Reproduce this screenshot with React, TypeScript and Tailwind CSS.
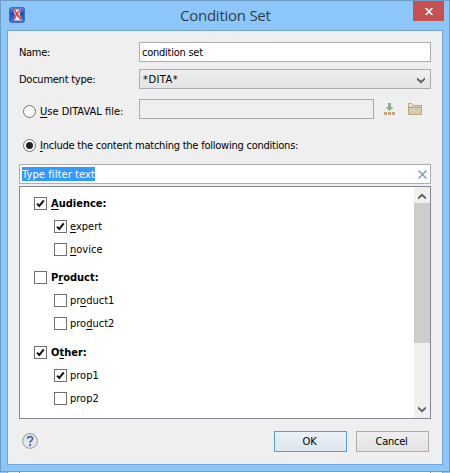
import type { ReactNode } from 'react';

function Mark({ text, at }: { text: string; at: number }) {
  if (at < 0) return <>{text}</>;
  return (
    <>
      {text.slice(0, at)}
      <span className="underline underline-offset-2 decoration-1">{text[at]}</span>
      {text.slice(at + 1)}
    </>
  );
}

function Check({ on }: { on: boolean }) {
  return (
    <span className="flex h-[13px] w-[13px] shrink-0 items-center justify-center border border-[#707070] bg-white">
      {on && (
        <svg width="11" height="11" viewBox="0 0 11 11">
          <path d="M2 5.6 4.3 8 8.8 2.4" fill="none" stroke="#111" strokeWidth="2" />
        </svg>
      )}
    </span>
  );
}

function Radio({ on }: { on: boolean }) {
  return (
    <svg width="13" height="13" viewBox="0 0 13 13" className="shrink-0">
      <circle cx="6.5" cy="6.5" r="6" fill="#fff" stroke="#707070" />
      {on && <circle cx="6.5" cy="6.5" r="3.5" fill="#212121" />}
    </svg>
  );
}

function Chevron({ up = false }: { up?: boolean }) {
  return (
    <svg width="8" height="7" viewBox="0 0 8 7" className={up ? 'rotate-180' : ''}>
      <path d="M0 0.5 4 3.8 8 0.5V2.8L4 6.5 0 2.8Z" fill="#606060" />
    </svg>
  );
}

interface Item {
  label: string;
  at: number;
  on: boolean;
}

interface Group extends Item {
  height: string;
  items: Item[];
}

const groups: Group[] = [
  {
    label: 'Audience:', at: 0, on: true, height: 'h-[74px]',
    items: [
      { label: 'expert', at: 0, on: true },
      { label: 'novice', at: 0, on: false },
    ],
  },
  {
    label: 'Product:', at: 1, on: false, height: 'h-[75px]',
    items: [
      { label: 'product1', at: 2, on: false },
      { label: 'product2', at: 3, on: false },
    ],
  },
  {
    label: 'Other:', at: 1, on: true, height: 'h-[74px]',
    items: [
      { label: 'prop1', at: -1, on: true },
      { label: 'prop2', at: -1, on: false },
    ],
  },
];

function Button({ children, primary = false }: { children: ReactNode; primary?: boolean }) {
  return (
    <button
      className={
        'h-[21px] w-[73px] border pr-[2px] leading-[20px] tracking-[-0.25px] ' +
        (primary
          ? 'border-[#569de5] bg-linear-to-b from-[#ecf1f6] to-[#dde5ee]'
          : 'border-[#acacac] bg-linear-to-b from-[#efefef] to-[#e3e3e3]')
      }
    >
      {children}
    </button>
  );
}

export default function App() {
  return (
    <div className="h-[473px] w-[450px] overflow-hidden bg-[#8dc6f8] font-['DejaVu_Sans_Condensed','DejaVu_Sans',sans-serif] text-[11px] leading-[13px] text-black [font-stretch:condensed]">
      <div className="h-[472px] border border-[#6f9cc6] px-[6px]">
        <header className="flex h-[29px] items-start">
          <svg width="16" height="16" viewBox="0 0 16 16" className="ml-[2px] mt-[6px]">
            <defs>
              <linearGradient id="logo" x1="0" y1="0" x2="0" y2="1">
                <stop offset="0" stopColor="#5b8fe0" />
                <stop offset="0.4" stopColor="#1d4eb0" />
                <stop offset="1" stopColor="#3b7bdc" />
              </linearGradient>
            </defs>
            <rect x="0.5" y="0.5" width="15" height="15" rx="2" fill="url(#logo)" stroke="#3b6fc4" />
            <path d="M4 2.5h8l-1.5 5L13.5 13.5H4L6 8Z" fill="#e6effc" />
            <path d="M4.5 2C7 5 9 9 12.5 13M11.5 2.5C8.5 5.5 6 9 4.5 13.5" fill="none" stroke="#ef3b2c" strokeWidth="1.7" />
          </svg>
          <h1 className="ml-[155px] mt-[4px] whitespace-nowrap font-['Open_Sans','Noto_Sans',sans-serif] text-[15px] leading-[20px] tracking-[-0.25px] text-[#2c3e4e] [font-stretch:normal]">
            Condition Set
          </h1>
          <button className="ml-auto mr-[-1px] flex h-[20px] w-[31px] items-center justify-center bg-[#c75050]">
            <svg width="8" height="7" viewBox="0 0 8 7">
              <path d="M0.7 0 7.3 7M7.3 0 0.7 7" stroke="#fff" strokeWidth="1.7" />
            </svg>
          </button>
        </header>

        <main className="h-[435px] w-[436px] border border-[#74a6d3] bg-[#efefef] pl-[11px] pt-[11px]">
          <div className="flex h-[20px] items-center">
            <span className="w-[120px] tracking-[-0.3px]">Name:</span>
            <div className="h-[20px] w-[292px] border border-[#abadb3] bg-white pl-[2px] leading-[20px] tracking-[-0.25px]">condition set</div>
          </div>
          <div className="mt-[7px] flex h-[20px] items-center">
            <span className="w-[120px] whitespace-nowrap tracking-[-0.25px]">Document type:</span>
            <div className="flex h-[20px] w-[292px] items-center justify-between border border-[#abadb3] bg-linear-to-b from-[#efefef] to-[#e3e3e3] pl-[3px] pr-[5px]">
              <span className="tracking-[0.45px]">*DITA*</span>
              <span className="mt-[3px]"><Chevron /></span>
            </div>
          </div>
          <div className="mt-[10px] flex h-[20px] items-center">
            <div className="flex w-[120px] items-center gap-[4px] whitespace-nowrap pl-[4px] pt-[4px]">
              <Radio on={false} />
              <span><Mark text="Use DITAVAL file:" at={0} /></span>
            </div>
            <div className="h-[20px] w-[235px] border border-[#abadb3]" />
            <svg width="12" height="13" viewBox="0 0 12 13" className="ml-[10px]">
              <path d="M4 0h3v4h2.5L5.5 8 1.5 4H4Z" fill="#86b286" />
              <path d="M0 9h3v3H0ZM4 9h3v3H4ZM8 9h3v3H8Z" fill="#c7a67f" />
            </svg>
            <svg width="14" height="13" viewBox="0 0 14 13" className="ml-[12px]">
              <path d="M.5 11.5V.5h3l2 2h8v9Z" fill="#d7ccb4" stroke="#bea67c" />
              <path d="M1 1h2.5l1.5 2H1Z" fill="#e6e6e6" />
              <path d="M1 4.5h12" stroke="#bea67c" />
            </svg>
          </div>
          <div className="mt-[20px] flex h-[13px] items-center gap-[4px] pl-[4px]">
            <Radio on />
            <span className="whitespace-nowrap tracking-[-0.23px]"><Mark text="Include the content matching the following conditions:" at={0} /></span>
          </div>
          <div className="mt-[12px] flex h-[20px] w-[412px] items-center justify-between border border-[#abadb3] bg-white pl-[2px] pr-[3px]">
            <span className="h-[14px] w-[73px] whitespace-nowrap bg-[#3399ff] leading-[16px] tracking-[0.1px] text-white">Type filter text</span>
            <svg width="9" height="9" viewBox="0 0 9 9" className="mt-[1px]">
              <path d="M.5.5 8.5 8.5M8.5.5.5 8.5" stroke="#7f9ab8" strokeWidth="1.5" />
            </svg>
          </div>
          <div className="mt-[2px] flex h-[233px] w-[412px] justify-between border border-[#828790] bg-white">
            <div className="pl-[14px] pt-[10px]">
              {groups.map((g) => (
                <div key={g.label} className={g.height}>
                  <div className="flex h-[13px] items-center gap-[4px] font-bold">
                    <Check on={g.on} />
                    <span><Mark text={g.label} at={g.at} /></span>
                  </div>
                  {g.items.map((i) => (
                    <div key={i.label} className="mt-[10px] flex h-[13px] items-center gap-[3px] pl-[20px]">
                      <Check on={i.on} />
                      <span><Mark text={i.label} at={i.at} /></span>
                    </div>
                  ))}
                </div>
              ))}
            </div>
            <div className="flex w-[16px] flex-col items-center bg-[#f0f0f0] pt-[6px]">
              <Chevron up />
              <div className="mt-[3px] h-[140px] w-full bg-[#cdcdcd]" />
              <div className="mb-[5px] mt-auto flex"><Chevron /></div>
            </div>
          </div>
          <footer className="mt-[12px] flex h-[21px] items-start">
            <svg width="16" height="16" viewBox="0 0 16 16" className="ml-[3px] mt-[2px]">
              <circle cx="8" cy="8" r="7.4" fill="#e3e6ea" stroke="#a9a9a9" strokeWidth="1.1" />
              <path d="M5.6 5.8C5.5 2.8 10.7 2.8 10.6 5.8 10.5 7.4 8.2 7.4 8.1 9.8M8.1 11v2" fill="none" stroke="#4b5fa5" strokeWidth="1.8" />
            </svg>
            <div className="ml-[236px] flex gap-[9px]">
              <Button primary>OK</Button>
              <Button>Cancel</Button>
            </div>
          </footer>
        </main>
      </div>
      <div className="mx-[7px] h-px border-x border-[#74a6d3] bg-[#efefef] px-[11px]">
        <div className="h-px border-x border-[#828790] bg-white" />
      </div>
    </div>
  );
}
